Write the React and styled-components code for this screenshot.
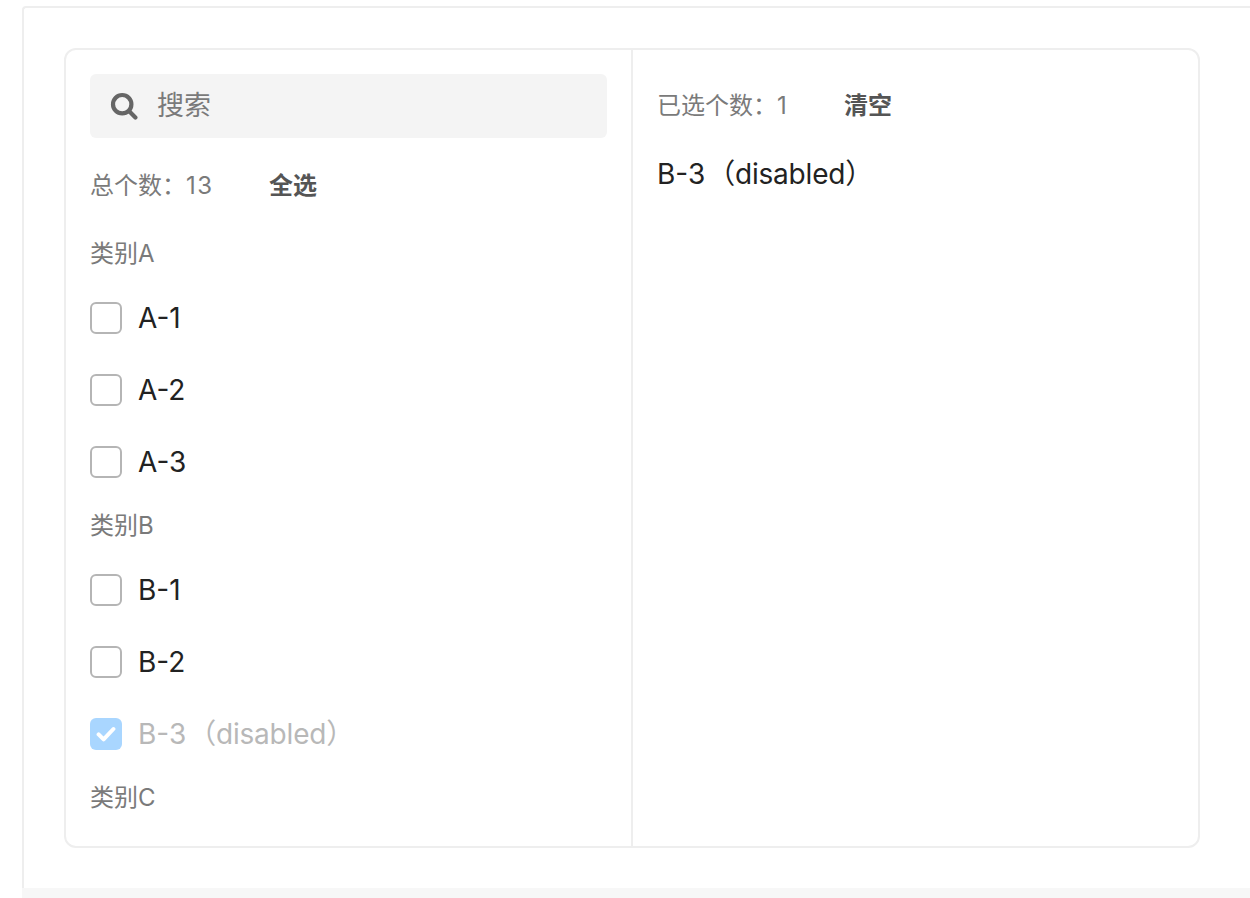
import React from "react";
import styled, { createGlobalStyle } from "styled-components";

const GlobalStyle = createGlobalStyle`
  html, body {
    margin: 0;
    padding: 0;
    height: 100%;
    background: #fff;
    overflow: hidden;
  }
  body {
    font-family: Inter, "Noto Sans CJK SC", sans-serif;
    line-height: 1.5;
  }
`;

const groups = [
  { name: "类别A", items: [{ label: "A-1" }, { label: "A-2" }, { label: "A-3" }] },
  {
    name: "类别B",
    items: [{ label: "B-1" }, { label: "B-2" }, { label: "B-3", note: "（disabled）", checked: true, disabled: true }],
  },
  { name: "类别C", items: [] },
];

const SearchIcon = () => (
  <svg width="28" height="28" viewBox="0 0 28 28" fill="none">
    <circle cx="12.2" cy="12.2" r="9.2" stroke="#666" strokeWidth="4.2" />
    <path d="M19 19l6.4 6.4" stroke="#666" strokeWidth="4.2" strokeLinecap="round" />
  </svg>
);

const CheckIcon = () => (
  <svg width="20" height="18" viewBox="0 0 20 18" fill="none">
    <path d="M2.6 9.4l5 5L17.4 4" stroke="#fff" strokeWidth="4" strokeLinecap="round" strokeLinejoin="round" />
  </svg>
);

export default function App() {
  return (
    <>
      <GlobalStyle />
      <Page>
        <Card>
          <Transfer>
            <LeftPanel>
              <SearchBox>
                <SearchIcon />
                <SearchText>搜索</SearchText>
              </SearchBox>
              <Summary>
                <Count>
                  总个数：<Num>13</Num>
                </Count>
                <Action>全选</Action>
              </Summary>
              {groups.map((group) => (
                <div key={group.name}>
                  <GroupName>{group.name}</GroupName>
                  {group.items.map((item) => (
                    <Row key={item.label}>
                      <Box $checked={item.checked}>{item.checked && <CheckIcon />}</Box>
                      <Label $disabled={item.disabled}>
                        {item.label}
                        {item.note && <Note>{item.note}</Note>}
                      </Label>
                    </Row>
                  ))}
                </div>
              ))}
            </LeftPanel>
            <RightPanel>
              <SelectedSummary>
                <SelectedCount>已选个数：1</SelectedCount>
                <Action>清空</Action>
              </SelectedSummary>
              <SelectedItem>
                B-3<Note>（disabled）</Note>
              </SelectedItem>
            </RightPanel>
          </Transfer>
        </Card>
        <BottomStrip />
      </Page>
    </>
  );
}

const Page = styled.div`
  height: 898px;
  padding: 6px 0 0 22px;
  box-sizing: border-box;
  overflow: hidden;
`;
const Card = styled.div`
  height: 882px;
  box-sizing: border-box;
  padding: 40px 0 0 40px;
  border-top: 2px solid #eeeeee;
  border-left: 2px solid #eeeeee;
  border-top-left-radius: 4px;
`;
const Transfer = styled.div`
  display: flex;
  width: 1136px;
  height: 800px;
  box-sizing: border-box;
  border: 2px solid #eeeeee;
  border-radius: 12px;
  overflow: hidden;
`;
const LeftPanel = styled.div`
  width: 567px;
  box-sizing: border-box;
  padding: 24px;
  border-right: 2px solid #eeeeee;
  flex-shrink: 0;
`;
const RightPanel = styled.div`
  flex: 1;
  padding: 24px;
`;
const SearchBox = styled.div`
  display: flex;
  align-items: center;
  height: 64px;
  padding-left: 20px;
  background: #f4f4f4;
  border-radius: 6px;
`;
const SearchText = styled.span`
  margin-left: 19px;
  font-size: 27px;
  color: #7a7a7a;
`;
const Summary = styled.div`
  display: flex;
  align-items: center;
  height: 48px;
  margin: 24px 0 16px;
`;
const SelectedSummary = styled.div`
  display: flex;
  align-items: center;
  height: 64px;
`;
const Count = styled.span`
  width: 179px;
  font-size: 24px;
  color: #7a7a7a;
`;
const Num = styled.span`
  letter-spacing: 1.5px;
`;
const SelectedCount = styled(Count)`
  width: 187px;
`;
const Action = styled.span`
  font-size: 24px;
  font-weight: 600;
  color: #555555;
`;
const GroupName = styled.div`
  display: flex;
  align-items: center;
  height: 56px;
  font-size: 24px;
  color: #7a7a7a;
`;
const Row = styled.div`
  display: flex;
  align-items: center;
  height: 72px;
`;
const Box = styled.span`
  display: flex;
  align-items: center;
  justify-content: center;
  width: 32px;
  height: 32px;
  box-sizing: border-box;
  border-radius: 6px;
  border: ${(p) => (p.$checked ? "none" : "2px solid #b5b5b5")};
  background: ${(p) => (p.$checked ? "#a9d6ff" : "#fff")};
`;
const Label = styled.span`
  margin-left: 16px;
  font-size: 28px;
  color: ${(p) => (p.$disabled ? "#b8b8b8" : "#222222")};
`;
const Note = styled.span`
  margin-left: 2px;
  letter-spacing: -0.2px;
`;
const SelectedItem = styled.div`
  height: 40px;
  margin-top: 16px;
  font-size: 28px;
  line-height: 40px;
  color: #222222;
`;
const BottomStrip = styled.div`
  height: 10px;
  background: #f7f7f7;
`;
